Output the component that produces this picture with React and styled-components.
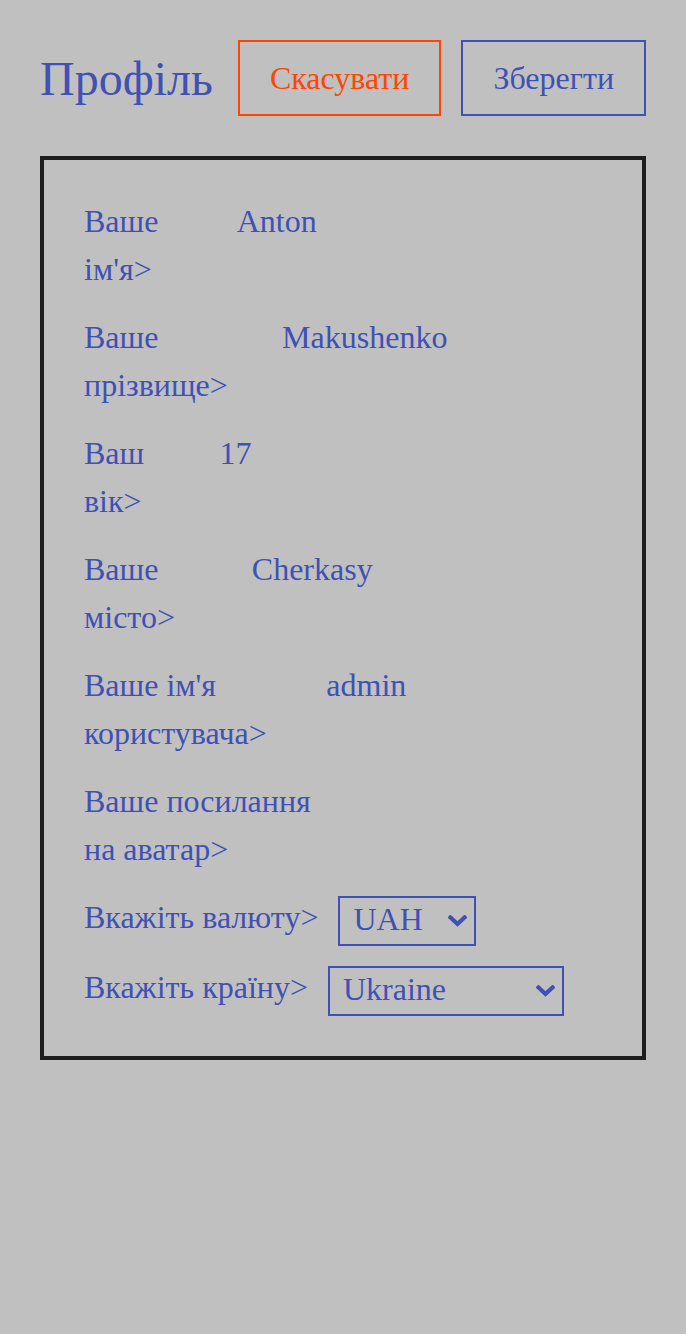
import React, { useState } from 'react'
import styled, { createGlobalStyle } from 'styled-components'

const fields = [
  { name: 'firstName', label: "Ваше ім'я>", value: 'Anton' },
  { name: 'lastName', label: 'Ваше прізвище>', value: 'Makushenko' },
  { name: 'age', label: 'Ваш вік>', value: '17' },
  { name: 'city', label: 'Ваше місто>', value: 'Cherkasy' },
  { name: 'username', label: "Ваше ім'я користувача>", value: 'admin' },
  { name: 'avatar', label: 'Ваше посилання на аватар>', value: '' },
]

function Chevron() {
  return (
    <svg width="19" height="12" viewBox="0 0 19 12">
      <polyline points="2.5,2.5 9.5,9 16.5,2.5" fill="none" stroke="#3f51b5" strokeWidth="4.2" strokeLinecap="square" />
    </svg>
  )
}

function App() {

  const [inputs, setInputs] = useState(
    Object.fromEntries(fields.map(f => [f.name, f.value]).concat([['currency', 'UAH'], ['country', 'Ukraine']]))
  )

  const handleChanges = (event) => {
    const name = event.target.name
    const value = event.target.value

    setInputs( values => ({...values, [name]: value}))
  }

  return (
    <>
      <GlobalStyle />
      <Page>
        <Header>
          <Title>Профіль</Title>
          <Actions>
            <Button type="button" $tone="#ff4500">Скасувати</Button>
            <Button type="button" $tone="#3f51b5">Зберегти</Button>
          </Actions>
        </Header>

        <Card>
          {fields.map(f => (
            <Row key={f.name}>
              <Label htmlFor={f.name}>{f.label}</Label>
              <Input id={f.name} name={f.name} type="text" onChange={handleChanges} value={inputs[f.name] || ''} />
            </Row>
          ))}

          <Row>
            <Label htmlFor="currency">Вкажіть валюту&gt;</Label>
            <SelectBox $width={138}>
              <Select id="currency" name="currency" value={inputs.currency} onChange={handleChanges}>
                <option>UAH</option>
                <option>USD</option>
                <option>EUR</option>
              </Select>
              <Chevron />
            </SelectBox>
          </Row>

          <Row>
            <Label htmlFor="country">Вкажіть країну&gt;</Label>
            <SelectBox $width={236}>
              <Select id="country" name="country" value={inputs.country} onChange={handleChanges}>
                <option>Ukraine</option>
                <option>Poland</option>
              </Select>
              <Chevron />
            </SelectBox>
          </Row>
        </Card>
      </Page>
    </>
  )
}

export default App;

const GlobalStyle = createGlobalStyle`
  body {
    margin: 0;
    background: #c0c0c0;
    font-family: 'Liberation Serif', 'Times New Roman', serif;
  }
`

const Page = styled.div`
  min-height: 1334px;
  padding: 40px;
  box-sizing: border-box;
`

const Header = styled.header`
  display: flex;
  align-items: center;
  justify-content: space-between;
`

const Title = styled.h1`
  margin: 0;
  font-size: 48px;
  font-weight: 400;
  color: #3f51b5;
`

const Actions = styled.div`
  display: flex;
  gap: 20px;
`

const Button = styled.button`
  background: transparent;
  border: 2px solid ${p => p.$tone};
  color: ${p => p.$tone};

  font-family: 'Liberation Serif', serif;
  font-size: 32px;
  line-height: 36px;

  padding: 18px 30px;
`

const Card = styled.form`
  margin-top: 40px;
  border: 4px solid #1e1e1e;
  padding: 40px 16px 40px 40px;

  display: flex;
  flex-direction: column;
  gap: 20px;
`

const Row = styled.div`
  display: flex;
  align-items: flex-start;
`

const Label = styled.label`
  margin: -3px 0 3px;
  font-size: 32px;
  line-height: 48px;
  color: #3f51b5;
`

const Input = styled.input`
  box-sizing: content-box;
  width: 420px;
  min-width: 0;
  height: 48px;
  margin: -3px 0 3px 11px;
  padding: 0 4px;

  border: none;
  outline: none;
  background: transparent;

  font-family: 'Liberation Serif', serif;
  font-size: 32px;
  line-height: 48px;
  color: #3f51b5;
`

const SelectBox = styled.div`
  flex: none;
  display: flex;
  align-items: center;

  box-sizing: border-box;
  width: ${p => p.$width}px;
  height: 50px;
  margin-left: 20px;
  padding-right: 7px;

  border: 2px solid #3f51b5;
`

const Select = styled.select`
  flex: 1;
  min-width: 0;
  height: 100%;
  padding: 0 0 4px 13px;

  appearance: none;
  border: none;
  outline: none;
  background: transparent;

  font-family: 'Liberation Serif', serif;
  font-size: 32px;
  color: #3f51b5;
`
